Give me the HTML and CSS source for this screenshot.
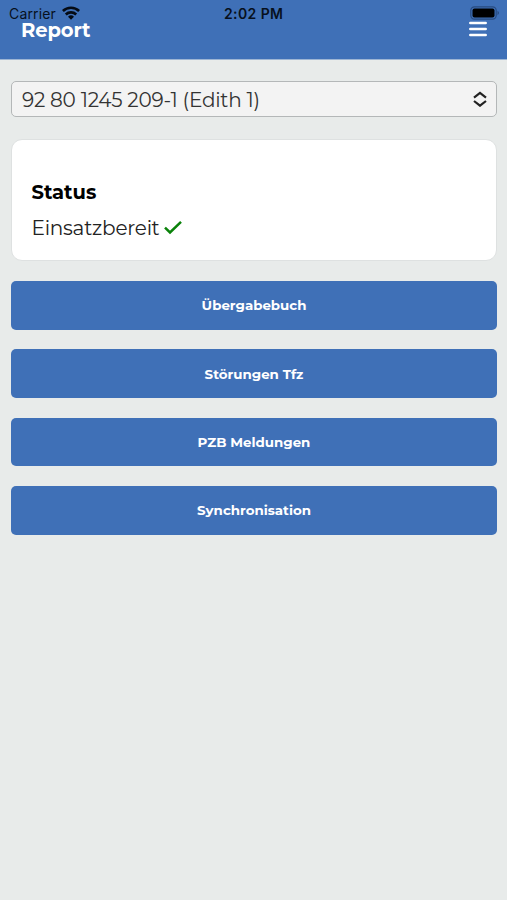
FILE: index.html
```html
<!DOCTYPE html>
<html lang="de">
<head>
<meta charset="utf-8">
<meta name="viewport" content="width=device-width">
<title>Report</title>
<link rel="stylesheet" href="styles.css">
</head>
<body>
<header class="topbar">
  <h1 class="title">Report</h1>
  <button class="menu" aria-label="Menu"><svg width="18" height="16" viewBox="0 0 18 16" stroke="#fff" stroke-width="2.5" stroke-linecap="round"><path d="M1.3 2h15.4M1.3 8h15.4M1.3 14h15.4"/></svg></button>
  <div class="statusbar">
    <div class="carrier"><span>Carrier</span>
      <svg width="18" height="14" viewBox="0 0 18 14" fill="none" stroke="#050b14" stroke-width="2.6"><path d="M.9 5a11.6 11.6 0 0 1 16.2 0M3.8 8.5a7.5 7.5 0 0 1 10.4 0"/><path d="M9 13.8 6 10.8a4.3 4.3 0 0 1 6 0z" fill="#050b14" stroke="none"/></svg>
    </div>
    <span class="clock">2:02 PM</span>
    <svg class="battery" width="30" height="14" viewBox="0 0 30 14"><rect x=".8" y=".8" width="25.4" height="12.4" rx="3.6" fill="none" stroke="#284b80" stroke-width="1.2"/><rect x="2.5" y="2.5" width="22" height="9" rx="2" fill="#000"/><path d="M27.5 4.8q3 2.2 0 4.4z" fill="#284b80"/></svg>
  </div>
</header>
<main class="content">
  <div class="select"><span class="value">92 80 1245 209-1 (Edith 1)</span>
    <svg width="14" height="16" viewBox="0 0 14 16" fill="none" stroke="#222" stroke-width="2.2"><path d="M1 6.6 7 1.9l6 4.7M1 10l6 4.7 6-4.7"/></svg>
  </div>
  <section class="card">
    <h2 class="heading">Status</h2>
    <p class="state"><span>Einsatzbereit</span>
      <svg width="18" height="14" viewBox="0 0 18 14" fill="none" stroke="#0a820a" stroke-width="2.5"><path d="M1 6.7l5 4.8L17 .9"/></svg>
    </p>
  </section>
  <button class="action">Übergabebuch</button>
  <button class="action">Störungen Tfz</button>
  <button class="action">PZB Meldungen</button>
  <button class="action">Synchronisation</button>
</main>
</body>
</html>
```
FILE: styles.css
```css
* { box-sizing: border-box; }
body { margin: 0; min-height: 900px; background: #e8ebea; color: #000; font-family: Montserrat, Inter, sans-serif; }
h1, h2, p { margin: 0; }
button { border: 0; padding: 0; font-family: inherit; }
.topbar { position: relative; height: 60px; padding: 18px 20px 0 21px; display: flex; justify-content: space-between; align-items: flex-start; background: #3f70b7; border-bottom: 1px solid #9db5d4; }
.title { color: #fff; font-size: 19.5px; line-height: 24px; font-weight: 700; letter-spacing: -.1px; }
.menu { margin-top: 3px; background: none; }
.menu svg { display: block; }
.statusbar { position: absolute; inset: 6px 7px auto 9px; height: 16px; color: #07101d; font-family: Inter, sans-serif; }
.carrier { display: flex; align-items: center; gap: 6px; font-size: 14px; line-height: 16px; letter-spacing: .15px; }
.carrier svg { margin-top: -2px; }
.clock { position: absolute; top: 0; left: 215px; font-size: 14px; line-height: 16px; font-weight: 600; letter-spacing: .4px; white-space: nowrap; }
.battery { position: absolute; top: 0; right: 0; }
.content { padding: 21px 10px 0 11px; display: flex; flex-direction: column; }
.select { height: 36px; padding: 0 9px 0 10px; display: flex; align-items: center; justify-content: space-between; background: #f3f3f3; border: 1px solid #b4b7b8; border-radius: 5px; color: #333; }
.value { padding-top: 1px; font-size: 20px; letter-spacing: -.23px; }
.card { height: 122px; margin: 22px 0 20px; padding: 39px 19.5px 0; background: #fff; border: 1px solid #dee1e1; border-radius: 11px; }
.heading { font-size: 19.5px; line-height: 26px; font-weight: 700; }
.state { display: flex; align-items: center; gap: 4px; margin-top: 10px; font-size: 20px; line-height: 26px; letter-spacing: -.23px; color: #222; }
.action { height: 48.5px; margin-bottom: 19.9px; border-radius: 5px; background: #3f70b7; color: #fff; font-size: 13.4px; font-weight: 700; }
```
